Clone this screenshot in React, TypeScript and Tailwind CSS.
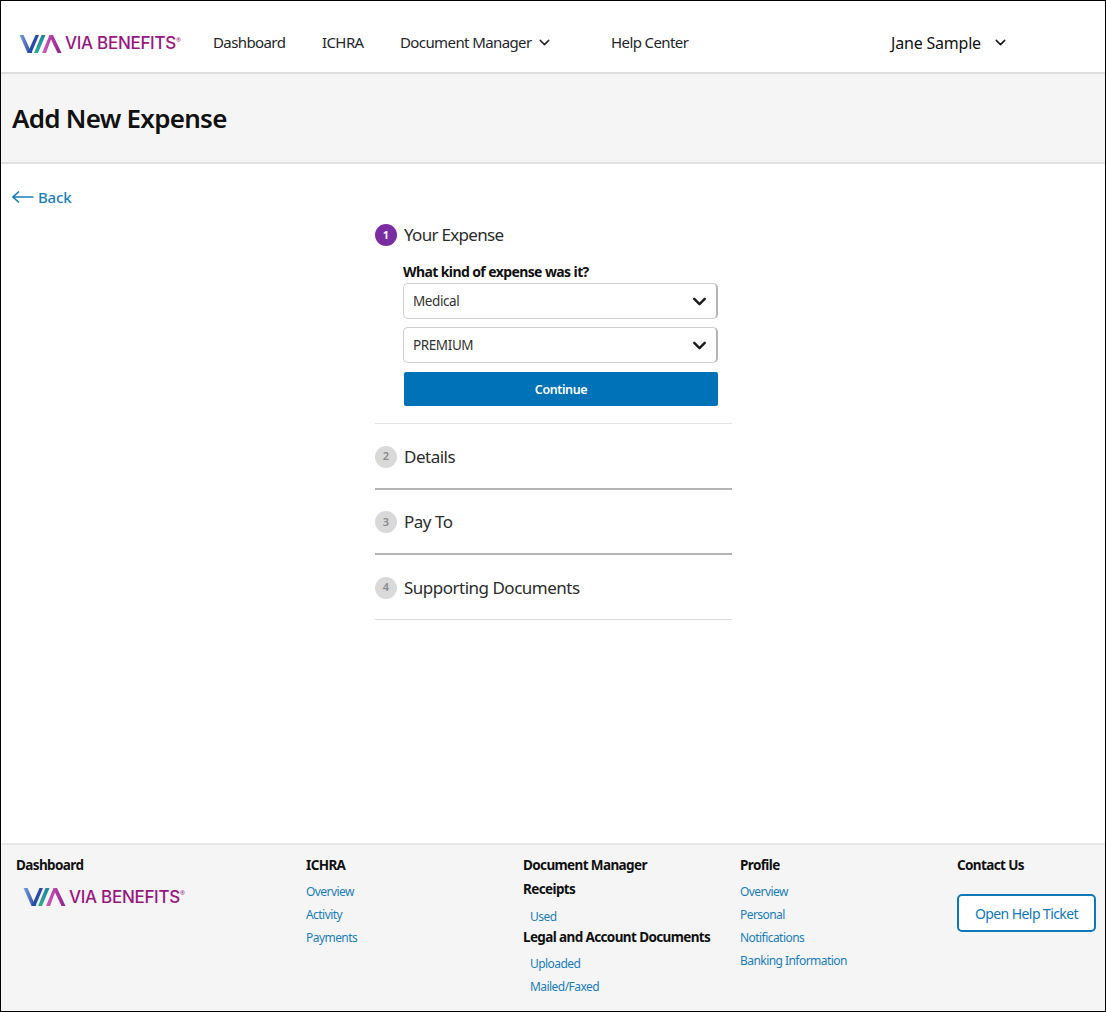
import React from "react";
import { ChevronDown } from "lucide-react";

const font = "font-['Noto_Sans','Open_Sans',sans-serif]";

function Logo({ id }: { id: string }) {
  return (
    <div className="flex items-center">
      <svg width="44" height="20" viewBox="0 0 44 22" preserveAspectRatio="none" className="shrink-0">
        <defs>
          <linearGradient id={`${id}a`} x1="0" y1="0" x2="1" y2="0">
            <stop offset="0" stopColor="#7aa5dd" />
            <stop offset="1" stopColor="#233f9c" />
          </linearGradient>
          <linearGradient id={`${id}b`} x1="0" y1="1" x2="1" y2="0">
            <stop offset="0" stopColor="#2fb58f" />
            <stop offset="1" stopColor="#1e7f9f" />
          </linearGradient>
          <linearGradient id={`${id}c`} x1="0" y1="1" x2="1" y2="1">
            <stop offset="0" stopColor="#d15fc0" />
            <stop offset="1" stopColor="#8e1f8a" />
          </linearGradient>
        </defs>
        <path d="M0.5 1H4.5L11 17L13.5 21H8.5Z" fill={`url(#${id}a)`} />
        <path d="M8.5 21L10.5 16L16.5 1H20L12.5 21Z" fill="#2b4ba8" />
        <path d="M15 21L22.5 1H26.5L19 21Z" fill={`url(#${id}b)`} />
        <path d="M23 21L30.5 1H34L42.5 21H38.5L32 6L27 21Z" fill={`url(#${id}c)`} />
      </svg>
      <span className="ml-[2px] text-[17px] leading-none tracking-[-0.3px] font-medium font-['Inter',sans-serif] text-[#98177f] whitespace-nowrap">
        VIA BENEFITS
      </span>
      <span className="self-start mt-[3px] text-[6px] leading-none text-[#98177f]">®</span>
    </div>
  );
}

function Step({ n, label, line }: { n: number; label: string; line: string }) {
  return (
    <div className={`pt-[1px] flex items-center gap-[7px] ${line}`}>
      <span className="w-[22px] h-[22px] rounded-full bg-[#d9d9d9] text-[#8a8a8a] text-[11px] font-semibold flex items-center justify-center">
        {n}
      </span>
      <span className="text-[17px] tracking-[-0.5px] text-[#2c2c2c]">{label}</span>
    </div>
  );
}

function Select({ value }: { value: string }) {
  return (
    <div className="h-[36px] rounded-[5px] border border-[#cfcfcf] border-r-2 border-r-[#b5b5b5] bg-white flex items-center justify-between pl-[9px] pr-[6px]">
      <span className="text-[13.5px] tracking-[-0.4px] text-[#333]">{value}</span>
      <ChevronDown size={21} strokeWidth={2.8} className="text-[#1c1c1c]" />
    </div>
  );
}

function FootLink({ children, indent }: { children: string; indent?: boolean }) {
  return (
    <a className={`block h-[23px] leading-[23px] text-[12px] tracking-[-0.55px] text-[#1a7dbb] whitespace-nowrap ${indent ? "pl-[7px]" : ""}`}>
      {children}
    </a>
  );
}

function FootHead({ children, cls = "" }: { children: string; cls?: string }) {
  return <div className={`text-[13.5px] leading-[20px] font-bold tracking-[-0.62px] text-[#111] whitespace-nowrap ${cls}`}>{children}</div>;
}

export default function App() {
  return (
    <div className={`${font} w-[1106px] h-[1012px] border border-black bg-white flex flex-col overflow-hidden`}>
      <header className="h-[73px] shrink-0 border-b-2 border-[#dddddd] flex items-center text-[#23262b] text-[15px] tracking-[-0.6px] pt-[12px]">
        <div className="ml-[18px] w-[194px] mt-[2px]">
          <Logo id="h" />
        </div>
        <span className="w-[109px]">Dashboard</span>
        <span className="w-[78px]">ICHRA</span>
        <span className="w-[211px] flex items-center gap-[4px]">
          Document Manager <ChevronDown size={17} strokeWidth={2} />
        </span>
        <span className="w-[280px]">Help Center</span>
        <span className="flex items-center gap-[11px] text-[#111] text-[16px] tracking-[-0.2px]">
          Jane Sample <ChevronDown size={17} strokeWidth={2} />
        </span>
      </header>

      <div className="h-[90px] shrink-0 bg-[#f5f5f5] border-b-2 border-[#e0e0e0] flex items-center pl-[11px]">
        <h1 className="text-[26px] font-semibold tracking-[-0.73px] text-[#111]">Add New Expense</h1>
      </div>

      <main className="flex-1">
        <a className="mt-[21px] ml-[11px] flex items-center gap-[4px] text-[15px] font-medium leading-[24px] tracking-[-0.2px] text-[#1a7dbb]">
          <svg width="22" height="14" viewBox="0 0 22 14" fill="none" stroke="#1a7dbb" strokeWidth="1.6">
            <path d="M21.5 7H1M7 1.5L1 7L7 12.5" />
          </svg>
          Back
        </a>
        <div className="ml-[374px] w-[357px] mt-[14px]">
          <div className="flex items-center gap-[7px] h-[24px]">
            <span className="w-[22px] h-[22px] rounded-full bg-[#7a2da3] text-white text-[11px] font-bold flex items-center justify-center">
              1
            </span>
            <span className="text-[17px] tracking-[-0.7px] text-[#2c2c2c]">Your Expense</span>
          </div>
          <div className="pl-[28px] pr-[14px] mt-[16px]">
            <div className="text-[14px] leading-[18px] font-bold tracking-[-0.6px] text-[#111] mb-[2px]">What kind of expense was it?</div>
            <div className="flex flex-col gap-[8px]">
              <Select value="Medical" />
              <Select value="PREMIUM" />
            </div>
            <button className="block mt-[9px] ml-[1px] w-[314px] h-[34px] pt-[2px] rounded-[2px] bg-[#0072b8] text-white text-[12.5px] font-semibold tracking-[-0.4px]">
              Continue
            </button>
          </div>
          <div className="mt-[17px] border-t border-[#e4e4e4]">
            <Step n={2} label="Details" line="h-[66px] border-b-2 border-[#b4b4b4]" />
            <Step n={3} label="Pay To" line="h-[65px] border-b-2 border-[#b4b4b4]" />
            <Step n={4} label="Supporting Documents" line="h-[65px] border-b border-[#dcdcdc]" />
          </div>
        </div>
      </main>

      <footer className="h-[168px] shrink-0 bg-[#f5f5f5] border-t-2 border-[#e8e8e8] flex pt-[10px]">
        <div className="w-[305px] pl-[15px]">
          <FootHead>Dashboard</FootHead>
          <div className="ml-[7px] mt-[12px]">
            <Logo id="f" />
          </div>
        </div>
        <div className="w-[217px]">
          <FootHead cls="mb-[5px]">ICHRA</FootHead>
          <FootLink>Overview</FootLink>
          <FootLink>Activity</FootLink>
          <FootLink>Payments</FootLink>
        </div>
        <div className="w-[217px]">
          <FootHead>Document Manager</FootHead>
          <FootHead cls="mt-[4px]">Receipts</FootHead>
          <div className="mt-[6px]"><FootLink indent>Used</FootLink></div>
          <FootHead cls="-mt-[1px]">Legal and Account Documents</FootHead>
          <div className="mt-[5px]">
            <FootLink indent>Uploaded</FootLink>
            <FootLink indent>Mailed/Faxed</FootLink>
          </div>
        </div>
        <div className="w-[217px]">
          <FootHead cls="mb-[5px]">Profile</FootHead>
          <FootLink>Overview</FootLink>
          <FootLink>Personal</FootLink>
          <FootLink>Notifications</FootLink>
          <FootLink>Banking Information</FootLink>
        </div>
        <div>
          <FootHead>Contact Us</FootHead>
          <button className="mt-[19px] w-[139px] h-[38px] rounded-[5px] border-2 border-[#0f78b8] bg-white text-[#0f78b8] text-[14px] tracking-[-0.58px]">
            Open Help Ticket
          </button>
        </div>
      </footer>
    </div>
  );
}
